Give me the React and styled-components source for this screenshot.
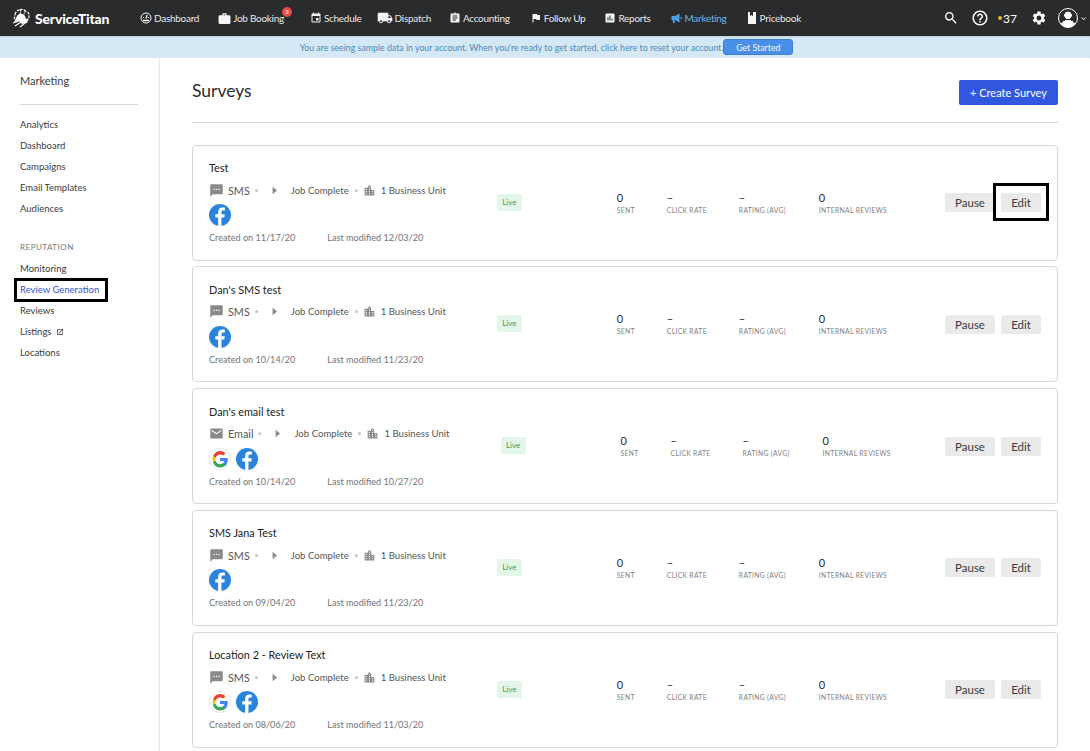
import React from 'react'
import styled, { createGlobalStyle } from 'styled-components'
import {
  MdEmail,
  MdEvent,
  MdFlag,
  MdHelpOutline,
  MdLocalShipping,
  MdAssignment,
  MdAssessment,
  MdOpenInNew,
  MdSearch,
  MdSettings,
  MdSms,
  MdExpandMore,
  MdLocationCity,
} from 'react-icons/md'

const GlobalStyle = createGlobalStyle`
  html, body {
    margin: 0;
    padding: 0;
    background: #fff;
    font-family: 'Lato', 'Open Sans', sans-serif;
    color: #3a3b3d;
  }
`

const navItems = [
  { label: 'Dashboard', Icon: GaugeIcon, gap: 0 },
  { label: 'Job Booking', Icon: CaseIcon, gap: 19, size: 13, badge: 3 },
  { label: 'Schedule', Icon: MdEvent, gap: 26 },
  { label: 'Dispatch', Icon: MdLocalShipping, gap: 15, size: 16 },
  { label: 'Accounting', Icon: MdAssignment, gap: 18 },
  { label: 'Follow Up', Icon: MdFlag, gap: 20 },
  { label: 'Reports', Icon: MdAssessment, gap: 19 },
  { label: 'Marketing', Icon: MegaphoneIcon, gap: 20, active: true },
  { label: 'Pricebook', Icon: BookIcon, gap: 19 },
]

const sideLinks = ['Analytics', 'Dashboard', 'Campaigns', 'Email Templates', 'Audiences']

const surveys = [
  { title: 'Test', channel: 'SMS', created: '11/17/20', modified: '12/03/20', google: false },
  { title: "Dan's SMS test", channel: 'SMS', created: '10/14/20', modified: '11/23/20', google: false },
  { title: "Dan's email test", channel: 'Email', created: '10/14/20', modified: '10/27/20', google: true },
  { title: 'SMS Jana Test', channel: 'SMS', created: '09/04/20', modified: '11/23/20', google: false },
  { title: 'Location 2 - Review Text', channel: 'SMS', created: '08/06/20', modified: '11/03/20', google: true },
]

function GaugeIcon(props) {
  return (
    <svg viewBox="0 0 24 24" width="1em" height="1em" fill="none" stroke="currentColor" {...props}>
      <circle cx="12" cy="12" r="10" strokeWidth="2" />
      <path d="M12 13l2-7" strokeWidth="2.500" />
      <path d="M6 17h12" strokeWidth="3" />
      <path d="M6 11h2M16 11h2" strokeWidth="2" />
    </svg>
  )
}

function CaseIcon(props) {
  return (
    <svg viewBox="0 0 24 24" width="1em" height="1em" fill="currentColor" {...props}>
      <path d="M8 6V2.500h8V6h5a2 2 0 0 1 2 2v12a2 2 0 0 1-2 2H3a2 2 0 0 1-2-2V8a2 2 0 0 1 2-2zm2 0h4V4.500h-4z" fillRule="evenodd" />
    </svg>
  )
}

function MegaphoneIcon(props) {
  return (
    <svg viewBox="0 0 24 24" fill="currentColor" width="1em" height="1em" {...props}>
      <path d="M1 8h7l9-5v18l-9-5H7l1 6H4l-1-6H1z" />
      <path d="M19 9l4 3-4 3z" />
    </svg>
  )
}

function BookIcon(props) {
  return (
    <svg viewBox="0 0 24 24" fill="currentColor" width="1em" height="1em" {...props}>
      <path d="M4 0h4v8l3-2 3 2V0h6v24H4z" />
    </svg>
  )
}

function ArrowIcon() {
  return (
    <svg viewBox="0 0 24 24" width="15" height="15" fill="currentColor">
      <path d="M9 6l7 6-7 6z" />
    </svg>
  )
}

function Logo() {
  return (
    <svg viewBox="0 0 20 20" width="20" height="20" fill="none" stroke="#fff" strokeWidth="1.200">
      <path d="M4 6a7 7 0 0 1 12-2M3 11c1-2 1-4 1-5M9 1c1 2 1 3 0 5M14 2c0 2 0 3-1 4M17 4c1 2 1 4 1 6" strokeDasharray="2.500 1" />
      <path d="M6 8c2-3 6-3 8 0l1 3 3-1-2 5-5 1-3-3-5 1z" fill="#fff" stroke="none" />
      <path d="M2 15l6-2M4 18l6-4M9 19l5-4" />
    </svg>
  )
}

function FacebookIcon() {
  return (
    <svg viewBox="0 0 24 24" width="22" height="22">
      <circle cx="12" cy="12" r="12" fill="#2b84dc" />
      <path
        fill="#fff"
        d="M13.600 24v-9.200h3.100l.5-3.600h-3.600V9c0-1.100.4-1.800 1.900-1.800h1.800V4c-.4-.1-1.500-.2-2.700-.2-2.700 0-4.600 1.700-4.600 4.700v2.700H6.900v3.600H10V24z"
      />
    </svg>
  )
}

function GoogleIcon() {
  return (
    <svg viewBox="0 0 24 24" width="22" height="22">
      <circle cx="12" cy="12" r="11.500" fill="#fff" stroke="#e4e4e4" />
      <g transform="translate(-3.300 -3) scale(1.280)">
        <path fill="#4285f4" d="M18.600 12.200c0-.5 0-1-.1-1.400H12v2.700h3.700c-.2.900-.7 1.600-1.400 2.100v1.800h2.300c1.300-1.200 2-3 2-5.200z" />
        <path fill="#34a853" d="M12 19c1.900 0 3.400-.6 4.600-1.700l-2.300-1.800c-.6.400-1.400.7-2.300.7-1.800 0-3.300-1.200-3.900-2.900H6.200v1.800C7.300 17.500 9.500 19 12 19z" />
        <path fill="#fbbc05" d="M8.100 13.300c-.3-.9-.3-1.800 0-2.700V8.800H6.200c-.8 1.500-.8 3.300 0 4.700z" />
        <path fill="#ea4335" d="M12 7.800c1 0 1.900.4 2.600 1l2-2C15.400 5.700 13.800 5 12 5 9.500 5 7.300 6.500 6.200 8.800l1.900 1.800C8.700 9 10.200 7.800 12 7.800z" />
      </g>
    </svg>
  )
}

const App = () => (
  <>
    <GlobalStyle />
    <TopBar>
      <Brand>
        <Logo />
        <BrandName>ServiceTitan</BrandName>
      </Brand>
      <NavList>
        {navItems.map(({ label, Icon, gap, size, badge, active }) => (
          <NavItem key={label} $gap={gap} $size={size} $active={active}>
            <Icon />
            <span>{label}</span>
            {badge && <NavBadge>{badge}</NavBadge>}
          </NavItem>
        ))}
      </NavList>
      <NavTools>
        <SearchIcon size={16} />
        <MdHelpOutline size={18} />
        <Points>37</Points>
        <MdSettings size={16} />
        <UserMenu>
          <Avatar />
          <MdExpandMore size={9} />
        </UserMenu>
      </NavTools>
    </TopBar>
    <Banner>
      <span>You are seeing sample data in your account. When you're ready to get started, click here to reset your account.</span>
      <BannerButton>Get Started</BannerButton>
    </Banner>
    <Page>
      <Sidebar>
        <SideTitle>Marketing</SideTitle>
        <SideGroup>
          {sideLinks.map((link) => (
            <SideLink key={link}>{link}</SideLink>
          ))}
        </SideGroup>
        <SideHeading>REPUTATION</SideHeading>
        <SideLink>Monitoring</SideLink>
        <SideLink $current>Review Generation</SideLink>
        <SideLink>Reviews</SideLink>
        <SideLink>
          Listings <MdOpenInNew size={8} />
        </SideLink>
        <SideLink>Locations</SideLink>
      </Sidebar>
      <Main>
        <Header>
          <h1>Surveys</h1>
          <CreateButton>+ Create Survey</CreateButton>
        </Header>
        <CardList>
          {surveys.map((survey, i) => (
            <Card key={survey.title}>
              <Info>
                <CardTitle>{survey.title}</CardTitle>
                <MetaRow>
                  {survey.channel === 'SMS' ? <MdSms size={15} /> : <MdEmail size={15} />}
                  <Channel>{survey.channel}</Channel>
                  <Dot />
                  <ArrowIcon />
                  <JobText>Job Complete</JobText>
                  <Dot $tight />
                  <MdLocationCity size={13} />
                  <MetaText>1 Business Unit</MetaText>
                </MetaRow>
                <Sources>
                  {survey.google && <GoogleIcon />}
                  <FacebookIcon />
                </Sources>
                <Dates>
                  <span>Created on {survey.created}</span>
                  <span>Last modified {survey.modified}</span>
                </Dates>
              </Info>
              <LiveBadge>Live</LiveBadge>
              <Stats>
                <Stat $width={50}>
                  <strong>0</strong>
                  <span>SENT</span>
                </Stat>
                <Stat $width={72}>
                  <strong>–</strong>
                  <span>CLICK RATE</span>
                </Stat>
                <Stat $width={80}>
                  <strong>–</strong>
                  <span>RATING (AVG)</span>
                </Stat>
                <Stat $width={90}>
                  <strong>0</strong>
                  <span>INTERNAL REVIEWS</span>
                </Stat>
              </Stats>
              <Actions>
                <ActionButton $width={50}>Pause</ActionButton>
                <ActionButton $width={40} $marked={i === 0}>Edit</ActionButton>
              </Actions>
            </Card>
          ))}
        </CardList>
      </Main>
    </Page>
  </>
)

const TopBar = styled.header`
  display: flex;
  align-items: center;
  height: 36px;
  background: #2a2b2d;
  color: #fff;
`

const Brand = styled.div`
  display: flex;
  align-items: center;
  gap: 4px;
  width: 140px;
  padding-left: 11px;
  box-sizing: border-box;
  flex-shrink: 0;
`

const BrandName = styled.span`
  font-size: 14px;
  font-weight: 900;
  letter-spacing: -0.2px;
`

const NavList = styled.nav`
  display: flex;
  align-items: center;
`

const NavItem = styled.div`
  position: relative;
  display: flex;
  align-items: center;
  gap: 2px;
  margin-left: ${(p) => p.$gap}px;
  font-size: 10px;
  letter-spacing: -0.28px;
  color: ${(p) => (p.$active ? '#6db3e8' : '#e8e8e8')};

  svg {
    font-size: ${(p) => p.$size || 12}px;
    color: ${(p) => (p.$active ? '#4a9fe0' : '#f5f5f5')};
  }
`

const NavBadge = styled.span`
  position: absolute;
  top: -5px;
  right: -8px;
  width: 10px;
  height: 10px;
  border-radius: 50%;
  background: #e5484d;
  color: #fff;
  font-size: 6px;
  line-height: 10px;
  text-align: center;
`

const NavTools = styled.div`
  display: flex;
  align-items: center;
  gap: 9px;
  margin-left: auto;
  padding-right: 2px;
  color: #fff;
`

const SearchIcon = styled(MdSearch)`
  margin-right: 3px;
`

const Points = styled.span`
  display: flex;
  align-items: center;
  gap: 1px;
  width: 22px;
  margin-right: 2px;
  font-size: 12px;

  &::before {
    content: '';
    width: 4px;
    height: 4px;
    border-radius: 50%;
    background: #f0b429;
  }
`

const UserMenu = styled.div`
  display: flex;
  align-items: center;
  gap: 1px;
  margin-left: 2px;
`

const Avatar = styled.div`
  box-sizing: border-box;
  width: 20px;
  height: 20px;
  border: 1px solid #fff;
  border-radius: 50%;
  overflow: hidden;
  background:
    radial-gradient(circle at 50% 35%, #fff 0 3.500px, transparent 4px),
    radial-gradient(ellipse 7px 5px at 50% 88%, #fff 0 98%, transparent 100%);
`

const Banner = styled.div`
  display: flex;
  align-items: center;
  justify-content: center;
  height: 22px;
  padding-left: 3px;
  background: #d5e8f5;
  box-shadow: inset 0 2px 2px -1px rgba(0, 0, 0, 0.12);
  color: #4d89b8;
  font-size: 8.800px;
`

const BannerButton = styled.button`
  width: 70px;
  height: 16px;
  padding: 0;
  border: 1px solid #3d7fd0;
  border-radius: 3px;
  background: #4a8fe7;
  color: #f2f7fd;
  font: inherit;
`

const Page = styled.div`
  display: flex;
  align-items: stretch;
`

const Sidebar = styled.aside`
  flex: 0 0 160px;
  box-sizing: border-box;
  height: 693px;
  padding: 15px 21px 0 20px;
  border-right: 1px solid #e8e8e8;
`

const SideTitle = styled.div`
  padding-bottom: 16px;
  border-bottom: 1px solid #d8d8d8;
  font-size: 11px;
  line-height: 15px;
  margin-bottom: 9px;
`

const SideGroup = styled.div`
  margin-bottom: 18px;
`

const SideHeading = styled.div`
  color: #77787a;
  font-size: 8px;
  line-height: 21px;
  letter-spacing: 0.5px;
`

const SideLink = styled.div`
  position: relative;
  display: flex;
  align-items: center;
  gap: 5px;
  height: 21px;
  font-size: 9.500px;
  color: ${(p) => (p.$current ? '#3457d5' : '#3a3b3d')};

  ${(p) =>
    p.$current &&
    `
    &::after {
      content: '';
      position: absolute;
      left: -6px;
      top: -1px;
      width: 94px;
      height: 24px;
      box-sizing: border-box;
      border: 3px solid #000;
    }
  `}
`

const Main = styled.main`
  flex: 1;
  min-width: 0;
  padding: 22px 32px 0;
`

const Header = styled.div`
  display: flex;
  align-items: flex-start;
  justify-content: space-between;
  box-sizing: border-box;
  height: 43px;
  border-bottom: 1px solid #d8d8d8;
  margin-bottom: 21.600px;

  h1 {
    margin: 0;
    font-size: 17.500px;
    font-weight: 400;
    line-height: 22px;
    color: #2a2b2d;
  }
`

const CreateButton = styled.button`
  width: 99px;
  height: 25px;
  padding: 0;
  border: 0;
  border-radius: 2px;
  background: #3157e0;
  color: #fff;
  font-family: inherit;
  font-size: 11px;
`

const CardList = styled.div`
  display: flex;
  flex-direction: column;
  gap: 5.750px;
`

const Card = styled.article`
  display: flex;
  align-items: center;
  box-sizing: border-box;
  height: 116px;
  padding: 0 16px;
  border: 1px solid #d8d8d8;
  border-radius: 4px;
`

const Info = styled.div`
  display: flex;
  flex-direction: column;
  flex-shrink: 0;
`

const CardTitle = styled.div`
  margin-bottom: 7px;
  color: #222;
  font-size: 10.900px;
  line-height: 14px;
`

const MetaRow = styled.div`
  display: flex;
  align-items: center;
  height: 16px;
  color: #8a8a8a;
`

const Channel = styled.span`
  margin-left: 4px;
  color: #55565a;
  font-size: 10.800px;
`

const MetaText = styled.span`
  margin-left: 5px;
  color: #55565a;
  font-size: 9.600px;
`

const JobText = styled(MetaText)`
  margin-left: 9px;
`

const Dot = styled.i`
  width: 3px;
  height: 3px;
  margin: ${(p) => (p.$tight ? '0 5px 0 6px' : '0 9px 0 5px')};
  border-radius: 50%;
  background: #c4c4c4;
`

const Sources = styled.div`
  display: flex;
  gap: 5px;
  margin-top: 6px;
`

const Dates = styled.div`
  display: flex;
  gap: 32px;
  margin-top: 6px;
  color: #737477;
  font-size: 9.100px;
  line-height: 12px;
`

const LiveBadge = styled.span`
  flex-shrink: 0;
  width: 25px;
  height: 17px;
  margin-left: 51px;
  margin-top: -1px;
  border-radius: 2px;
  background: #e2f7ea;
  color: #3f9a63;
  font-size: 8px;
  line-height: 17px;
  text-align: center;
`

const Stats = styled.div`
  display: flex;
  margin-left: 95px;
  margin-top: -1px;
`

const Stat = styled.div`
  width: ${(p) => p.$width}px;
  display: flex;
  flex-direction: column;

  strong {
    font-size: 11px;
    font-weight: 400;
    line-height: 15px;
    color: #2a2b2d;
  }

  span {
    color: #7f8083;
    font-size: 6.800px;
    line-height: 10px;
    letter-spacing: 0.3px;
    white-space: nowrap;
  }
`

const Actions = styled.div`
  display: flex;
  gap: 6px;
  margin-left: auto;
`

const ActionButton = styled.button`
  position: relative;
  width: ${(p) => p.$width}px;
  height: 19px;
  padding: 0;
  border: 0;
  border-radius: 2px;
  background: #eaeaea;
  color: #3a3b3d;
  font-family: inherit;
  font-size: 11.500px;

  ${(p) =>
    p.$marked &&
    `
    &::after {
      content: '';
      position: absolute;
      left: -8px;
      top: -10px;
      width: 56px;
      height: 38px;
      box-sizing: border-box;
      border: 3px solid #000;
    }
  `}
`

export default App
